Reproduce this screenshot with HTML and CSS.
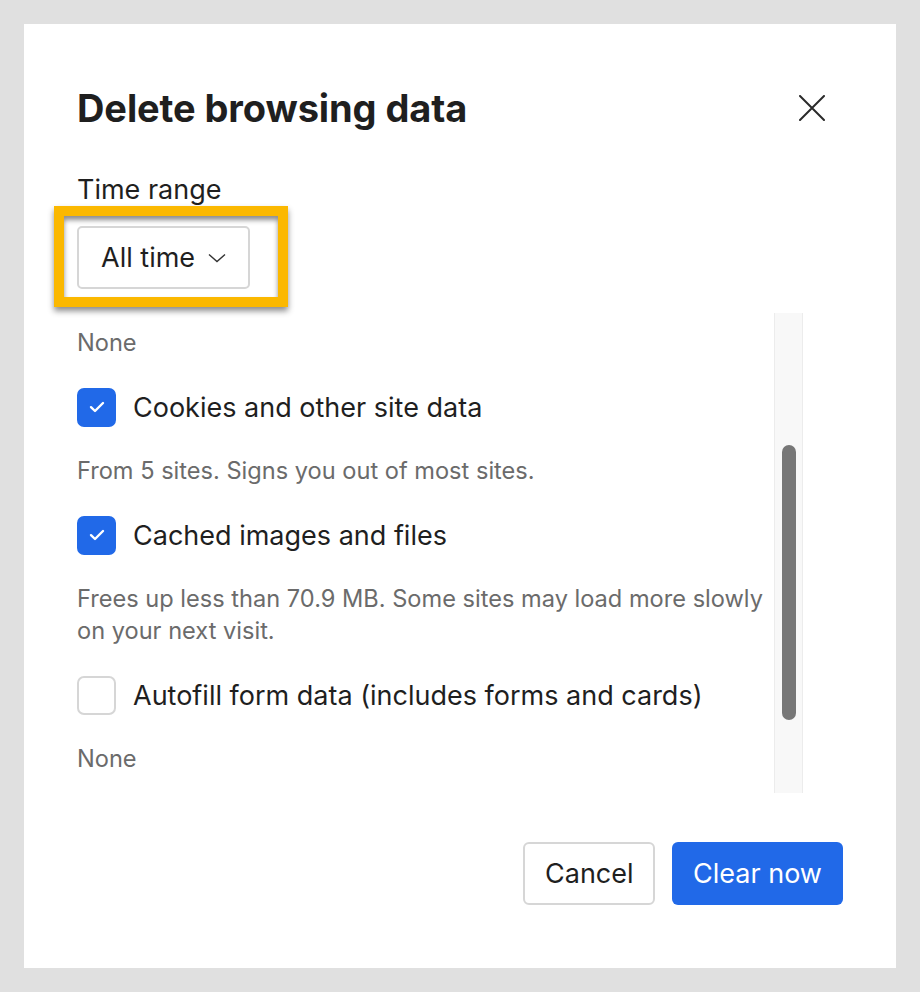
FILE: index.html
```html
<!DOCTYPE html>
<html lang="en">

<head>
  <meta charset="UTF-8" />
  <meta name="viewport" content="width=device-width, initial-scale=1.0" />
  <title>Delete browsing data</title>
  <link rel="stylesheet" href="styles.css">
</head>

<body>
  <div class="dialog">

    <div class="dialog-header">
      <h1 class="dialog-title">Delete browsing data</h1>
      <button class="close-button" aria-label="Close">
        <svg width="26" height="26" viewBox="0 0 26 26">
          <path d="M1 1 L25 25 M25 1 L1 25" stroke="#2a2a2a" stroke-width="2" stroke-linecap="round" fill="none" />
        </svg>
      </button>
    </div>

    <p class="range-label">Time range</p>
    <div class="range-select">
      <span>All time</span>
      <svg width="18" height="10" viewBox="0 0 18 10">
        <path d="M1 1.5 L9 8.5 L17 1.5" stroke="#333" stroke-width="1.4" fill="none" />
      </svg>
      <div class="highlight"></div>
    </div>

    <div class="scroll-area">
      <div class="options">
        <p class="option-desc">None</p>

        <label class="option-row">
          <span class="checkbox checked">
            <svg width="16" height="12" viewBox="0 0 16 12">
              <path d="M2 6.2 L6 10 L14 2" stroke="#fff" stroke-width="2.4" stroke-linecap="round" stroke-linejoin="round" fill="none" />
            </svg>
          </span>
          <span class="option-label">Cookies and other site data</span>
        </label>
        <p class="option-desc">From 5 sites. Signs you out of most sites.</p>

        <label class="option-row">
          <span class="checkbox checked">
            <svg width="16" height="12" viewBox="0 0 16 12">
              <path d="M2 6.2 L6 10 L14 2" stroke="#fff" stroke-width="2.4" stroke-linecap="round" stroke-linejoin="round" fill="none" />
            </svg>
          </span>
          <span class="option-label">Cached images and files</span>
        </label>
        <p class="option-desc">Frees up less than 70.9 MB. Some sites may load more slowly on your next visit.</p>

        <label class="option-row">
          <span class="checkbox"></span>
          <span class="option-label">Autofill form data (includes forms and cards)</span>
        </label>
        <p class="option-desc">None</p>
      </div>

      <div class="scrollbar">
        <div class="scrollbar-thumb"></div>
      </div>
    </div>

    <div class="dialog-footer">
      <button class="btn btn-cancel">Cancel</button>
      <button class="btn btn-primary">Clear now</button>
    </div>

  </div>
</body>

</html>
```

FILE: styles.css
```css
/* Base Reset */
* {
  margin: 0;
  padding: 0;
  box-sizing: border-box;
}

body {
  background-color: #e0e0e0;
  padding: 24px;
  font-family: Inter, 'Noto Sans', sans-serif;
  color: #1f1f1f;
}

/* Dialog Container */
.dialog {
  background-color: #fff;
  width: 872px;
  height: 944px;
  padding: 64px 53px 0 53px;
  display: flex;
  flex-direction: column;
  align-items: flex-start;
}

/* Header */
.dialog-header {
  width: 100%;
  display: flex;
  justify-content: space-between;
  align-items: center;
  padding-right: 18px;
}

.dialog-title {
  font-size: 38px;
  line-height: 40px;
  font-weight: 700;
  letter-spacing: -0.1px;
}

.close-button {
  background: transparent;
  border: none;
  display: flex;
  cursor: pointer;
}

/* Time Range */
.range-label {
  margin-top: 46px;
  font-size: 27px;
  line-height: 32px;
}

.range-select {
  position: relative;
  margin-top: 20px;
  height: 63px;
  width: 173px;
  padding: 0 22px;
  border: 2px solid #d6d6d6;
  border-radius: 5px;
  display: flex;
  align-items: center;
  justify-content: space-between;
  font-size: 27px;
}

.highlight {
  position: absolute;
  left: -25px;
  top: -22px;
  width: 234px;
  height: 101px;
  border: 10px solid #fbb800;
  box-shadow: 0 4px 6px rgba(0, 0, 0, 0.45), inset 0 4px 5px rgba(0, 0, 0, 0.45);
  pointer-events: none;
}

/* Scrollable Options */
.scroll-area {
  margin-top: 24px;
  width: 726px;
  height: 480px;
  display: flex;
  overflow: hidden;
}

.options {
  flex: 1;
  padding-top: 14px;
  display: flex;
  flex-direction: column;
  gap: 28px;
}

.option-row {
  display: flex;
  align-items: center;
  gap: 17px;
  height: 40px;
}

.checkbox {
  width: 39px;
  height: 39px;
  border-radius: 7px;
  border: 2px solid #d6d6d6;
  display: flex;
  align-items: center;
  justify-content: center;
}

.checkbox.checked {
  background-color: #2169e8;
  border-color: #2169e8;
}

.option-label {
  font-size: 27px;
}

.option-desc {
  font-size: 23.6px;
  line-height: 32px;
  color: #6b6b6b;
}

.scrollbar {
  width: 29px;
  background-color: #f8f8f8;
  border-left: 1px solid #ececec;
  border-right: 1px solid #ececec;
  padding-top: 132px;
  display: flex;
  justify-content: center;
}

.scrollbar-thumb {
  width: 14px;
  height: 275px;
  border-radius: 7px;
  background-color: #777;
}

/* Footer Buttons */
.dialog-footer {
  width: 100%;
  margin-top: 49px;
  display: flex;
  justify-content: flex-end;
  gap: 17px;
}

.btn {
  height: 63px;
  padding: 0 20px;
  border-radius: 6px;
  font-family: Inter, 'Noto Sans', sans-serif;
  font-size: 27px;
  cursor: pointer;
}

.btn-cancel {
  width: 132px;
  background-color: #fff;
  border: 2px solid #d6d6d6;
  color: #1f1f1f;
}

.btn-primary {
  width: 171px;
  background-color: #2169e8;
  border: none;
  color: #fff;
}
```
